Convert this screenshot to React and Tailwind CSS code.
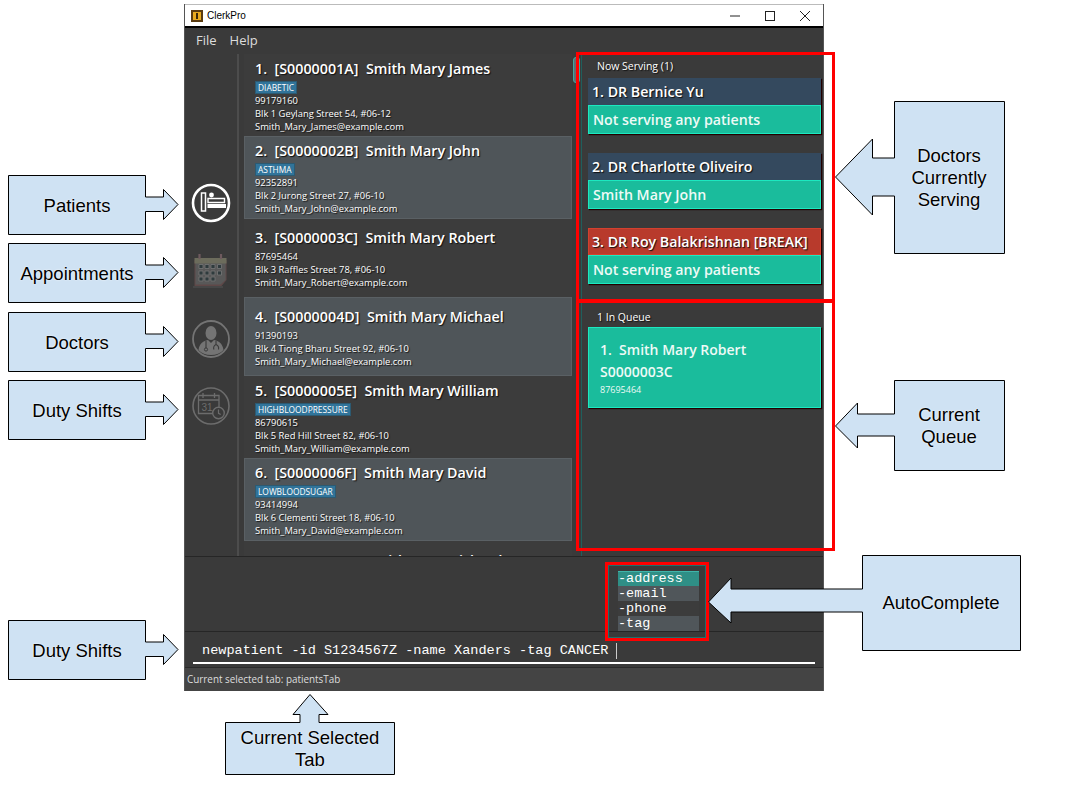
const patients = [
  { h: 'h-[82px]', name: '1.  [S0000001A]  Smith Mary James', tag: 'DIABETIC', phone: '99179160', addr: 'Blk 1 Geylang Street 54, #06-12', mail: 'Smith_Mary_James@example.com' },
  { h: 'h-[83px]', name: '2.  [S0000002B]  Smith Mary John', tag: 'ASTHMA', phone: '92352891', addr: 'Blk 2 Jurong Street 27, #06-10', mail: 'Smith_Mary_John@example.com' },
  { h: 'h-[78px]', name: '3.  [S0000003C]  Smith Mary Robert', phone: '87695464', addr: 'Blk 3 Raffles Street 78, #06-10', mail: 'Smith_Mary_Robert@example.com' },
  { h: 'h-[79px]', name: '4.  [S0000004D]  Smith Mary Michael', phone: '91390193', addr: 'Blk 4 Tiong Bharu Street 92, #06-10', mail: 'Smith_Mary_Michael@example.com' },
  { h: 'h-[82px]', name: '5.  [S0000005E]  Smith Mary William', tag: 'HIGHBLOODPRESSURE', phone: '86790615', addr: 'Blk 5 Red Hill Street 82, #06-10', mail: 'Smith_Mary_William@example.com' },
  { h: 'h-[83px]', name: '6.  [S0000006F]  Smith Mary David', tag: 'LOWBLOODSUGAR', phone: '93414994', addr: 'Blk 6 Clementi Street 18, #06-10', mail: 'Smith_Mary_David@example.com' },
]

const doctors = [
  { name: '1. DR Bernice Yu', patient: 'Not serving any patients', mb: 'mb-[19px]' },
  { name: '2. DR Charlotte Oliveiro', patient: 'Smith Mary John', mb: 'mb-[19px]' },
  { name: '3. DR Roy Balakrishnan [BREAK]', patient: 'Not serving any patients', onBreak: true },
]

const shadow = '[text-shadow:1px_1px_1px_#111]'

function PatientCard({ p, index }) {
  const stripe = index % 2 === 1
  return (
    <div className={`${p.h} flex flex-col justify-center text-white ${stripe ? 'pl-[10px] bg-[#4f5559] border border-[#5a6064]' : 'pl-[11px] bg-[#3c3c3c]'}`}>
      <div className={`text-[14.3px] leading-[22px] font-semibold whitespace-pre ${shadow}`}>{p.name}</div>
      {p.tag && (
        <div className="flex mt-[1px]">
          <span className="h-[13px] px-[2px] text-[8.4px] leading-[12px] bg-[#31749a] border border-[#2c5a72]">{p.tag}</span>
        </div>
      )}
      <div className={`text-[9.4px] leading-[13px] ${p.tag ? '' : 'mt-[1px]'} ${shadow}`}>{p.phone}</div>
      <div className={`text-[9.4px] leading-[13px] ${shadow}`}>{p.addr}</div>
      <div className={`text-[9.4px] leading-[13px] ${shadow}`}>{p.mail}</div>
    </div>
  )
}

function BedIcon() {
  return (
    <svg width="40" height="40" viewBox="0 0 40 40" fill="none">
      <circle cx="20" cy="20" r="18" stroke="#fff" strokeWidth="2.6" />
      <path d="M10.5 10h4v18h-4z" stroke="#fff" strokeWidth="1.5" />
      <circle cx="20.5" cy="12" r="2.4" fill="#fff" />
      <path d="M17 15.5h16.5v4H17z" stroke="#fff" strokeWidth="1.4" />
      <path d="M16.5 21h18.5v4H16.5z" fill="#fff" />
    </svg>
  )
}

function CalendarIcon() {
  return (
    <svg width="38" height="38" viewBox="0 0 38 38" fill="none">
      <path d="M1 35h30" stroke="#4d4d4d" strokeWidth="1.5" />
      <path d="M2.5 8h32v20l-5 6h-27z" fill="#5f4848" />
      <path d="M3.5 11h30v17l-5 4.5h-25z" fill="#585858" />
      <path d="M2.5 6h32v5.5h-32z" fill="#6c6c5c" />
      <path d="M7.5 2v5M29 2v5" stroke="#6e5a5e" strokeWidth="2.2" />
      <path d="M7 12.5h4v4H7zM13 12.5h4v4h-4zM19 12.5h4v4h-4zM25.5 12.5h4v4h-4zM7 19h4v4H7zM13 19h4v4h-4zM19 19h4v4h-4zM25.5 19h4v4h-4zM7 25h4v4H7zM13 25h4v4h-4zM19 25h4v4h-4z" fill="#2f3b3d" stroke="#777" strokeWidth="0.8" />
    </svg>
  )
}

function DoctorIcon() {
  return (
    <svg width="40" height="40" viewBox="0 0 40 40" fill="none">
      <circle cx="20" cy="20" r="18" stroke="#747474" strokeWidth="1.8" />
      <ellipse cx="20" cy="14" rx="5.5" ry="7" fill="#747474" />
      <path d="M7.5 31c1-7 5-9 9.5-10l3 3 3-3c4.5 1 8.5 3 9.5 10-3 3.5-7.5 5-12.5 5S10.5 34.5 7.5 31z" fill="#747474" />
      <path d="M15 22v7M25 22v3.5M25 25.5c2 1 3 3 2.5 5M25 25.5c-2 1-3 3-2 5" stroke="#3a3a3a" strokeWidth="1.1" />
      <circle cx="15" cy="30.5" r="1.6" stroke="#3a3a3a" strokeWidth="1" />
    </svg>
  )
}

function ShiftIcon() {
  return (
    <svg width="40" height="40" viewBox="0 0 40 40" fill="none">
      <circle cx="20" cy="20" r="18" stroke="#6c6c6c" strokeWidth="1.6" />
      <path d="M7.5 9.5h20.5v18H7.5zM7.5 14h20.5M12 7v5M23.5 7v5" stroke="#6c6c6c" strokeWidth="1.3" />
      <text x="10.5" y="24.5" fontSize="10" fill="#6c6c6c" fontFamily="Liberation Sans, sans-serif">31</text>
      <circle cx="27.5" cy="27" r="5.8" fill="#3a3a3a" stroke="#6c6c6c" strokeWidth="1.4" />
      <path d="M27.5 23.5v3.8l2.2 1.2" stroke="#6c6c6c" strokeWidth="1.2" />
    </svg>
  )
}

function Callout({ className, path, viewW, viewH, textClass, children }) {
  return (
    <div className={`absolute ${className}`}>
      <svg className="absolute inset-0" width={viewW} height={viewH} viewBox={`0 0 ${viewW} ${viewH}`}>
        <path d={path} fill="#cfe2f3" stroke="#000" strokeWidth="1" />
      </svg>
      <div className={`absolute flex items-center justify-center text-center text-black text-[18.5px] leading-[22px] [text-shadow:0_0_2px_#fff] ${textClass}`}>
        {children}
      </div>
    </div>
  )
}

// box 137x59 with a right pointing arrow
const rightArrow = 'M0.5 0.5H137.5V22H155.5V14.5L170 29.5L155.5 44.5V36.5H137.5V59.5H0.5Z'

export default function App() {
  return (
    <div className="relative w-[1067px] h-[799px] bg-white overflow-hidden font-['Open_Sans',sans-serif]">
      <div className="absolute left-[184px] top-[4px] w-[640px] h-[687px] flex flex-col bg-[#3a3a3a] border-x border-[#555]">
        {/* title bar */}
        <div className="h-[24px] shrink-0 bg-white border-t border-[#bbb] border-b-2 border-b-black flex items-center text-black">
          <svg className="ml-[6px]" width="12" height="12" viewBox="0 0 12 12">
            <rect width="12" height="12" fill="#5a3b10" />
            <rect x="2" y="2" width="8" height="8" fill="#e8a91e" />
            <rect x="5" y="3" width="2" height="6" fill="#3a2608" />
          </svg>
          <span className="ml-[4px] text-[10px] font-['Liberation_Sans',sans-serif]">ClerkPro</span>
          <div className="ml-auto flex items-center">
            <svg className="mr-[25px]" width="10" height="10" viewBox="0 0 10 10"><path d="M0 5h10" stroke="#222" /></svg>
            <svg className="mr-[25px]" width="10" height="10" viewBox="0 0 10 10"><rect x="0.5" y="0.5" width="9" height="9" fill="none" stroke="#222" /></svg>
            <svg className="mr-[13px]" width="10" height="10" viewBox="0 0 10 10"><path d="M0 0l10 10M10 0L0 10" stroke="#222" /></svg>
          </div>
        </div>
        {/* menu */}
        <div className="h-[26px] shrink-0 flex items-center pl-[11px] gap-[13px] text-[13px] text-[#ddd]">
          <span>File</span>
          <span>Help</span>
        </div>
        {/* main */}
        <div className="h-[502px] shrink-0 flex overflow-hidden">
          <div className="w-[54px] shrink-0 border-r-2 border-[#4c4c4c] flex flex-col items-center pt-[129px]">
            <BedIcon />
            <div className="mt-[29px]"><CalendarIcon /></div>
            <div className="mt-[29px]"><DoctorIcon /></div>
            <div className="mt-[27px]"><ShiftIcon /></div>
          </div>
          <div className="w-[329px] shrink-0 ml-[4px] pl-[1px] overflow-hidden">
            {patients.map((p, i) => <PatientCard key={p.name} p={p} index={i} />)}
            <div className="h-[40px] pl-[11px] pt-[9px] text-white bg-[#3c3c3c] text-[14.3px] leading-[22px] font-semibold whitespace-pre">7.  [S0000007G]  Smith Mary Richard</div>
          </div>
          <div className="w-[7px] shrink-0 ml-[1px] pt-[3px]">
            <div className="h-[26px] bg-[#5e6e72] border border-[#3fa7a0] rounded-[3px]"></div>
          </div>
          <div className="flex-1 min-w-0 ml-[1px] pl-[6px] pr-[2px] flex flex-col border-l border-[#1f5f5c]">
            <div className="h-[247px] shrink-0">
              <div className={`h-[24px] pt-[1px] pl-[9px] flex items-center text-[10.5px] text-white ${shadow}`}>Now Serving (1)</div>
              {doctors.map(d => (
                <div key={d.name} className={`${d.mb || ''} shadow-[1px_1px_1px_#200]`}>
                  <div className={`h-[27px] pt-[1px] flex items-center text-[14.2px] font-semibold text-white ${shadow} ${d.onBreak ? 'pl-[3px] bg-[#b83a2c] border border-[#d4402e]' : 'pl-[4px] bg-[#34495e]'}`}>{d.name}</div>
                  <div className="h-[29px] pt-[1px] pl-[4px] flex items-center text-[14.2px] font-semibold text-[#eefaf6] bg-[#1abc9c] border border-[#1ce8c0]">{d.patient}</div>
                </div>
              ))}
            </div>
            <div className={`h-[26px] pl-[9px] flex items-end pb-[1px] text-[10.5px] text-white ${shadow}`}>1 In Queue</div>
            <div className="h-[81px] pl-[11px] flex flex-col justify-center bg-[#1abc9c] border border-[#1ce8c0] shadow-[1px_1px_1px_#200] text-[#eefaf6]">
              <div className="text-[14px] leading-[22px] font-semibold whitespace-pre">1.  Smith Mary Robert</div>
              <div className="text-[14px] leading-[22px] font-semibold">S0000003C</div>
              <div className="text-[9px] leading-[14px]">87695464</div>
            </div>
          </div>
        </div>
        {/* results + autocomplete */}
        <div className="h-[75px] shrink-0 border-t border-[#262626] flex justify-end pr-[124px] pt-[14px]">
          <div className="w-[81px] h-[60px] font-['Liberation_Mono',monospace] text-[13.5px] leading-[15px] text-white">
            <div className="h-[15px] bg-[#2f8f86] border-t border-[#3fb5aa] leading-[14px]">-address</div>
            <div className="h-[15px] bg-[#50565a]">-email</div>
            <div className="h-[15px] bg-[#3c3c3c]">-phone</div>
            <div className="h-[15px] bg-[#50565a]">-tag</div>
          </div>
        </div>
        {/* command box */}
        <div className="h-[36px] shrink-0 border-t border-[#262626] px-[8px] pt-[8px]">
          <div className="flex items-center h-[24px] pl-[9px] font-['Liberation_Mono',monospace] text-[13.55px] text-white whitespace-pre border-b-2 border-white">
            <span>newpatient -id S1234567Z -name Xanders -tag CANCER</span>
            <span className="ml-[8px] w-[1px] h-[16px] bg-[#ccc]"></span>
          </div>
        </div>
        {/* status */}
        <div className="flex-1 bg-[#444] border-t border-[#2a2a2a] pl-[2px] flex items-center text-[9.9px] text-[#ddd]">Current selected tab: patientsTab</div>
      </div>

      {/* annotations on top of the screenshot */}
      <div className="absolute left-[576px] top-[52px] w-[259px] h-[250px] border-[3px] border-[#ff0000]"></div>
      <div className="absolute left-[576px] top-[300px] w-[259px] h-[251px] border-[3px] border-[#ff0000]"></div>
      <div className="absolute left-[605px] top-[562px] w-[104px] h-[79px] border-[3px] border-[#ff0000] shadow-[inset_0_0_0_1px_#1f6f6c]"></div>

      <div className="font-['Liberation_Sans',sans-serif]">
        <Callout className="left-[8px] top-[175px] w-[171px] h-[60px]" viewW={171} viewH={60} path={rightArrow} textClass="left-0 top-[1px] w-[138px] h-[60px]">Patients</Callout>
        <Callout className="left-[8px] top-[243px] w-[171px] h-[60px]" viewW={171} viewH={60} path={rightArrow} textClass="left-0 top-[1px] w-[138px] h-[60px]">Appointments</Callout>
        <Callout className="left-[8px] top-[312px] w-[171px] h-[60px]" viewW={171} viewH={60} path={rightArrow} textClass="left-0 top-[1px] w-[138px] h-[60px]">Doctors</Callout>
        <Callout className="left-[8px] top-[380px] w-[171px] h-[60px]" viewW={171} viewH={60} path={rightArrow} textClass="left-0 top-[1px] w-[138px] h-[60px]">Duty Shifts</Callout>
        <Callout className="left-[8px] top-[620px] w-[171px] h-[60px]" viewW={171} viewH={60} path={rightArrow} textClass="left-0 top-[1px] w-[138px] h-[60px]">Duty Shifts</Callout>
        <Callout className="left-[225px] top-[694px] w-[171px] h-[81px]" viewW={171} viewH={81} path="M0.5 28.5H75V20.5H68L85 0.5L103 20.5H94V28.5H169.5V80.5H0.5Z" textClass="left-0 top-[29px] w-[170px] h-[52px]"><span>Current Selected<br />Tab</span></Callout>
        <Callout className="left-[835px] top-[101px] w-[170px] h-[153px]" viewW={170} viewH={153} path="M59.5 0.5H169.5V152.5H59.5V95H37.5V114L0.5 76L37.5 38V57H59.5Z" textClass="left-[59px] top-0 w-[110px] h-[153px]"><span>Doctors<br />Currently<br />Serving</span></Callout>
        <Callout className="left-[835px] top-[380px] w-[170px] h-[91px]" viewW={170} viewH={91} path="M59.5 0.5H169.5V90.5H59.5V56H22.5V68L0.5 46L22.5 23V34H59.5Z" textClass="left-[59px] top-0 w-[110px] h-[91px]"><span>Current<br />Queue</span></Callout>
        <Callout className="left-[708px] top-[555px] w-[313px] h-[96px]" viewW={313} viewH={96} path="M154.5 0.5H312.5V95.5H154.5V57H23V68L0.5 47L23 23V34H154.5Z" textClass="left-[154px] top-0 w-[158px] h-[96px]">AutoComplete</Callout>
      </div>
    </div>
  )
}
